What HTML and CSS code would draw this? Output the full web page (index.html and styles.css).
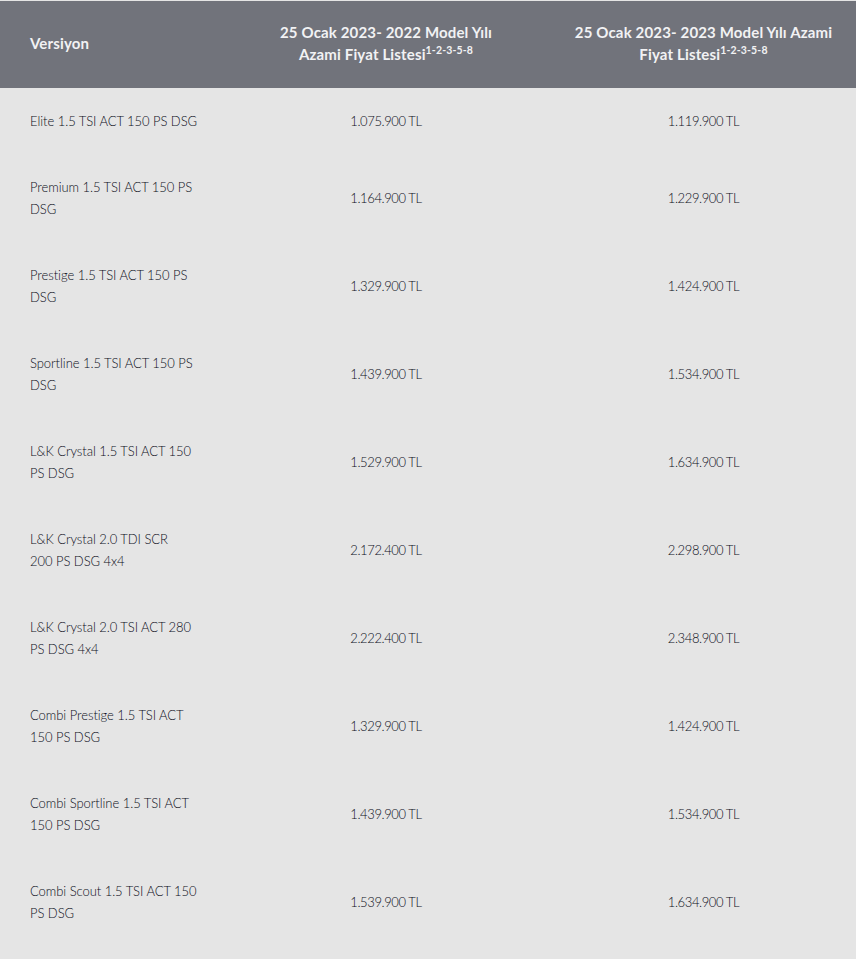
FILE: index.html
```html
<!DOCTYPE html>
<html lang="tr">
<head>
<meta charset="utf-8">
<title>Fiyat Listesi</title>
<link rel="stylesheet" href="styles.css">
</head>
<body>
<div class="page">
<table class="prices">
  <colgroup>
    <col class="c1"><col class="c2"><col class="c3">
  </colgroup>
  <thead>
    <tr>
      <th class="name">Versiyon</th>
      <th>25 Ocak 2023- 2022 Model Yılı<br>Azami Fiyat Listesi<sup>1-2-3-5-8</sup></th>
      <th>25 Ocak 2023- 2023 Model Yılı Azami<br>Fiyat Listesi<sup>1-2-3-5-8</sup></th>
    </tr>
  </thead>
  <tbody>
    <tr><td class="name">Elite 1.5 TSI ACT 150 PS DSG</td><td class="price">1.075.900 TL</td><td class="price">1.119.900 TL</td></tr>
    <tr><td class="name">Premium 1.5 TSI ACT 150 PS<br>DSG</td><td class="price">1.164.900 TL</td><td class="price">1.229.900 TL</td></tr>
    <tr><td class="name">Prestige 1.5 TSI ACT 150 PS<br>DSG</td><td class="price">1.329.900 TL</td><td class="price">1.424.900 TL</td></tr>
    <tr><td class="name">Sportline 1.5 TSI ACT 150 PS<br>DSG</td><td class="price">1.439.900 TL</td><td class="price">1.534.900 TL</td></tr>
    <tr><td class="name">L&amp;K Crystal 1.5 TSI ACT 150<br>PS DSG</td><td class="price">1.529.900 TL</td><td class="price">1.634.900 TL</td></tr>
    <tr><td class="name">L&amp;K Crystal 2.0 TDI SCR<br>200 PS DSG 4x4</td><td class="price">2.172.400 TL</td><td class="price">2.298.900 TL</td></tr>
    <tr><td class="name">L&amp;K Crystal 2.0 TSI ACT 280<br>PS DSG 4x4</td><td class="price">2.222.400 TL</td><td class="price">2.348.900 TL</td></tr>
    <tr><td class="name">Combi Prestige 1.5 TSI ACT<br>150 PS DSG</td><td class="price">1.329.900 TL</td><td class="price">1.424.900 TL</td></tr>
    <tr><td class="name">Combi Sportline 1.5 TSI ACT<br>150 PS DSG</td><td class="price">1.439.900 TL</td><td class="price">1.534.900 TL</td></tr>
    <tr><td class="name">Combi Scout 1.5 TSI ACT 150<br>PS DSG</td><td class="price">1.539.900 TL</td><td class="price">1.634.900 TL</td></tr>
  </tbody>
</table>
</div>
</body>
</html>
```
FILE: styles.css
```css
html, body {
  margin: 0;
  padding: 0;
  background: #e5e5e5;
}
.page {
  padding-top: 1px;
  width: 856px;
  min-height: 958px;
  font-family: "Lato", "Open Sans", sans-serif;
  font-size: 13px;
  line-height: 22px;
  color: #0c0e1a;
}
.prices {
  width: 856px;
  border-collapse: collapse;
  table-layout: fixed;
}
.c1 { width: 221px; }
.c2 { width: 330px; }
.c3 { width: 305px; }
.prices thead tr {
  background: #71737b;
  height: 87px;
}
.prices th {
  color: #f2f2f4;
  font-size: 15px;
  font-weight: 700;
  text-align: center;
  vertical-align: middle;
  padding: 0 0 3px 0;
  letter-spacing: 0.15px;
}
.prices th sup {
  font-size: 10.5px;
  line-height: 0;
  vertical-align: 6px;
}
.prices td {
  text-align: center;
  vertical-align: middle;
  padding: 22px 0;
  font-weight: 300;
  letter-spacing: -0.05px;
}
.prices td.price {
  letter-spacing: -0.4px;
}
.prices .name {
  text-align: left;
  padding-left: 30px;
}
```
